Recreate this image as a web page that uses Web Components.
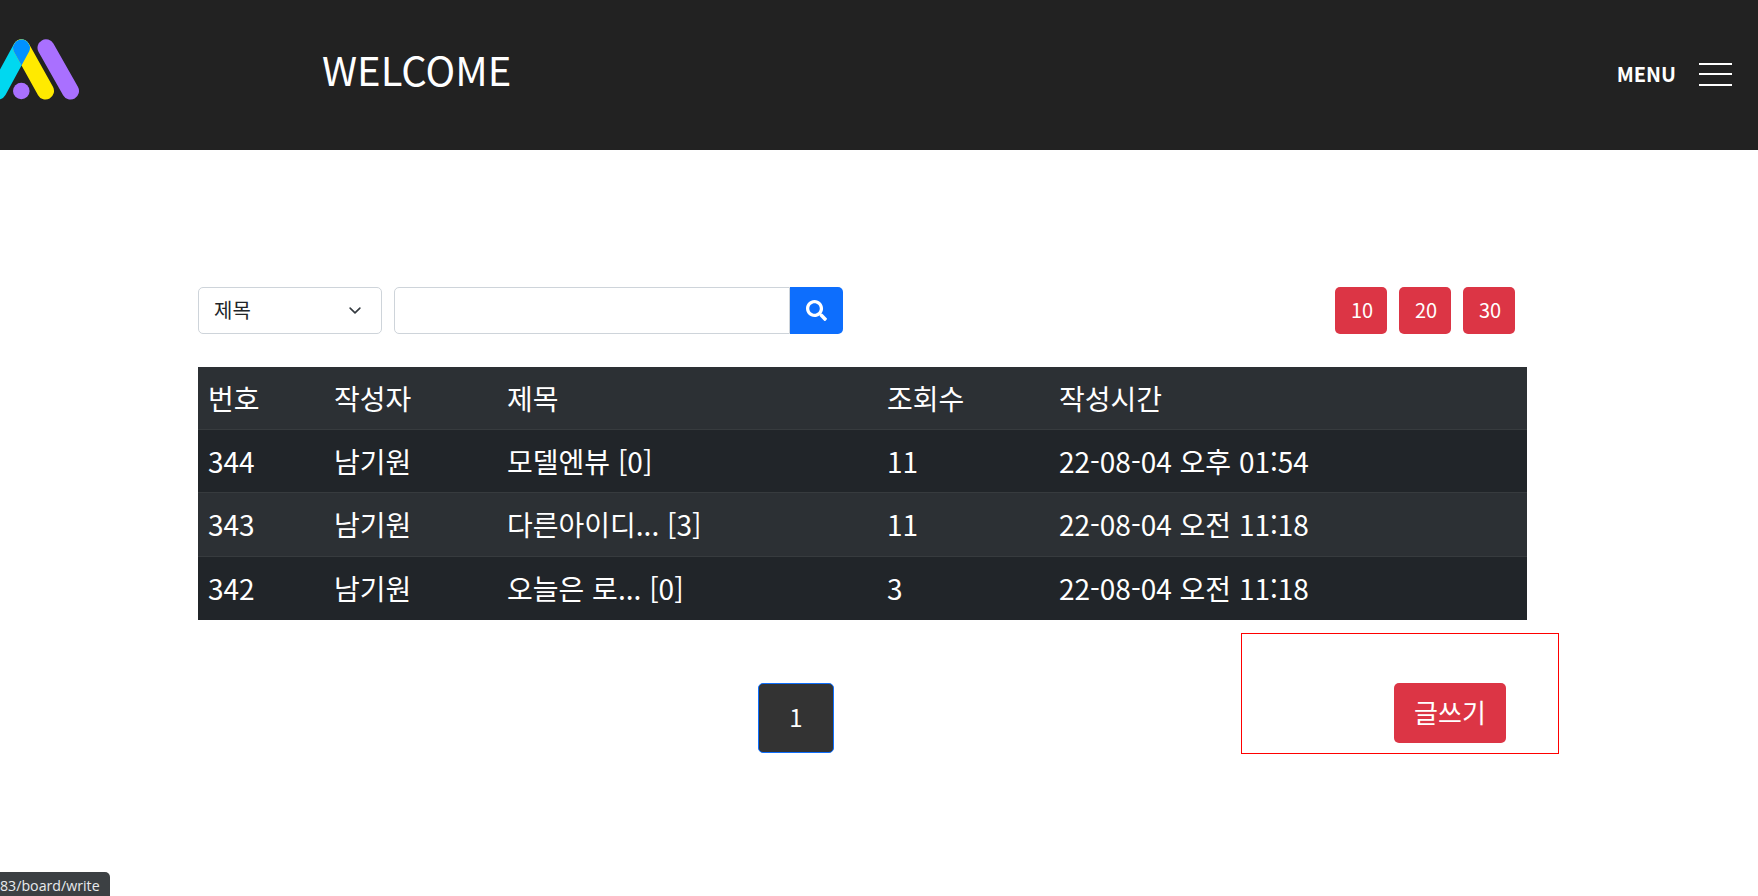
<!DOCTYPE html>
<html lang="ko">
<head>
<meta charset="utf-8">
<title>board</title>
<style>
    html, body { margin: 0; padding: 0; background: #fff; }
    body { font-family: "Noto Sans CJK KR", "Noto Sans", sans-serif; overflow: hidden; height: 896px; }
    main { display: block; padding: 137px 0 0 198px; }
</style>
</head>
<body>
<site-header title="WELCOME"></site-header>
<main>
    <board-toolbar></board-toolbar>
    <board-table></board-table>
    <board-footer></board-footer>
</main>
<status-bubble>83/board/write</status-bubble>

<script>
class SiteHeader extends HTMLElement {
    constructor() {
        super();
        this.attachShadow({mode: 'open'});
        this.shadowRoot.innerHTML = `
            <style>
                :host {
                    display: flex;
                    height: 150px;
                    background: #222;
                    color: #fff;
                    box-sizing: border-box;
                }
                svg { display: block; margin-top: 39px; width: 80px; height: 61px; flex: none; }
                h1 {
                    margin: 39px 0 0 242px;
                    font-size: 40px;
                    font-weight: 400;
                    line-height: 60px;
                }
                .menu {
                    margin-left: auto;
                    display: flex;
                    align-items: center;
                    gap: 23px;
                    padding: 0 26px 2px 0;
                    font-size: 20px;
                    font-weight: 700;
                }
                .menu span { position: relative; top: -1px; }
                .bars { display: flex; flex-direction: column; gap: 8.5px; width: 33px; }
                .bars i { display: block; height: 2px; background: #fff; }
            </style>
            <svg viewBox="0 39 80 61" aria-hidden="true">
                <defs>
                    <mask id="over" maskUnits="userSpaceOnUse" x="-20" y="30" width="110" height="80">
                        <path d="M21.5 47.8L45.5 91" stroke="#fff" stroke-width="17" stroke-linecap="round"/>
                    </mask>
                </defs>
                <path d="M21.5 47.8L-2 91" stroke="#00d8f0" stroke-width="17" stroke-linecap="round"/>
                <path d="M21.5 47.8L45.5 91" stroke="#ffea00" stroke-width="17" stroke-linecap="round"/>
                <path d="M21.5 47.8L-2 91" stroke="#0091ff" stroke-width="17" stroke-linecap="round" mask="url(#over)"/>
                <path d="M46 47.8L70.5 91" stroke="#a970ff" stroke-width="17" stroke-linecap="round"/>
                <circle cx="21.3" cy="91" r="8.3" fill="#a970ff"/>
            </svg>
            <h1></h1>
            <div class="menu"><span>MENU</span><div class="bars"><i></i><i></i><i></i></div></div>
        `;
    }

    connectedCallback() {
        this.shadowRoot.querySelector('h1').textContent = this.getAttribute('title');
    }
}

class RedButton extends HTMLElement {
    constructor() {
        super();
        this.attachShadow({mode: 'open'});
        this.shadowRoot.innerHTML = `
            <style>
                :host {
                    display: flex;
                    align-items: center;
                    justify-content: center;
                    box-sizing: border-box;
                    width: var(--w, 52px);
                    height: var(--h, 47px);
                    padding: 0 0 var(--pb, 2px) var(--pl, 2px);
                    background: #dc3545;
                    color: #fff;
                    border-radius: 5px;
                    font-size: var(--fs, 20px);
                    cursor: pointer;
                }
            </style>
            <slot></slot>
        `;
    }
}

class BoardToolbar extends HTMLElement {
    constructor() {
        super();
        this.attachShadow({mode: 'open'});
        this.shadowRoot.innerHTML = `
            <style>
                :host { display: flex; width: 1317px; height: 47px; font-family: inherit; }
                select, input { box-sizing: border-box; height: 47px; border: 1px solid #ced4da; background-color: #fff; font-family: inherit; margin: 0; }
                select {
                    width: 184px;
                    padding: 0 40px 3px 15px;
                    border-radius: 5px;
                    font-size: 20px;
                    color: #212529;
                    appearance: none;
                    background-image: url("data:image/svg+xml,%3csvg xmlns='http://www.w3.org/2000/svg' viewBox='0 0 16 16'%3e%3cpath fill='none' stroke='%23343a40' stroke-linecap='round' stroke-linejoin='round' stroke-width='2' d='M2 5l6 6 6-6'/%3e%3c/svg%3e");
                    background-repeat: no-repeat;
                    background-position: right 17px center;
                    background-size: 18px 13px;
                }
                input { width: 396px; margin-left: 12px; border-radius: 5px 0 0 5px; outline: none; }
                .go {
                    width: 53px;
                    height: 47px;
                    background: #0d6efd;
                    border-radius: 0 5px 5px 0;
                    display: flex;
                    align-items: center;
                    justify-content: center;
                }
                .go svg { width: 21px; height: 21px; fill: #fff; }
                .sizes { margin-left: auto; display: flex; gap: 12px; }
            </style>
            <select><option>제목</option></select>
            <input type="text">
            <div class="go">
                <svg viewBox="0 0 512 512"><path d="M505 442.700L405.300 343c-4.500-4.500-10.600-7-17-7H372c27.600-35.300 44-79.700 44-128C416 93.100 322.900 0 208 0S0 93.100 0 208s93.100 208 208 208c48.300 0 92.700-16.400 128-44v16.300c0 6.400 2.500 12.500 7 17l99.700 99.700c9.400 9.400 24.600 9.400 33.900 0l28.300-28.300c9.400-9.400 9.400-24.600.1-34zM208 336c-70.700 0-128-57.200-128-128 0-70.700 57.200-128 128-128 70.700 0 128 57.200 128 128 0 70.700-57.200 128-128 128z"/></svg>
            </div>
            <div class="sizes">
                <red-button>10</red-button>
                <red-button>20</red-button>
                <red-button>30</red-button>
            </div>
        `;
    }
}

class BoardTable extends HTMLElement {
    constructor() {
        super();
        this.attachShadow({mode: 'open'});
        const rows = [
            ['344', '남기원', '모델엔뷰 [0]', '11', '22-08-04 오후 01:54'],
            ['343', '남기원', '다른아이디... [3]', '11', '22-08-04 오전 11:18'],
            ['342', '남기원', '오늘은 로... [0]', '3', '22-08-04 오전 11:18']
        ];
        const tds = row => row.map(c => `<td>${c}</td>`).join('');
        this.shadowRoot.innerHTML = `
            <style>
                :host { display: block; width: 1329px; margin-top: 33px; }
                table {
                    width: 100%;
                    table-layout: fixed;
                    border-collapse: collapse;
                    color: #fff;
                    font-size: 28px;
                }
                td, th {
                    padding: 8px;
                    height: 46px;
                    line-height: 46px;
                    font-weight: 400;
                    text-align: left;
                    white-space: nowrap;
                    box-sizing: content-box;
                    border-bottom: 1px solid #373b3e;
                }
                td:first-child, th:first-child { padding-left: 10px; }
                tr { background: #212529; }
                tr.odd { background: #2c3034; }
                tr.odd td { padding-bottom: 9px; }
                tr:last-child td { border-bottom-color: #212529; }
            </style>
            <table>
                <colgroup>
                    <col style="width:128px"><col style="width:173px"><col style="width:380px"><col style="width:172px"><col>
                </colgroup>
                <thead>
                    <tr class="odd"><th>번호</th><th>작성자</th><th>제목</th><th>조회수</th><th>작성시간</th></tr>
                </thead>
                <tbody>
                    ${rows.map((r, i) => `<tr class="${i % 2 ? 'odd' : ''}">${tds(r)}</tr>`).join('')}
                </tbody>
            </table>
        `;
    }
}

class BoardFooter extends HTMLElement {
    constructor() {
        super();
        this.attachShadow({mode: 'open'});
        this.shadowRoot.innerHTML = `
            <style>
                :host { display: flex; align-items: flex-start; margin-top: 13px; }
                .page {
                    box-sizing: border-box;
                    width: 76px;
                    height: 70px;
                    margin: 50px 0 0 560px;
                    padding-bottom: 3px;
                    display: flex;
                    align-items: center;
                    justify-content: center;
                    background: #333;
                    color: #fff;
                    border: 1px solid #0d6efd;
                    border-radius: 5px;
                    font-size: 24px;
                }
                .box {
                    box-sizing: border-box;
                    width: 318px;
                    height: 121px;
                    margin-left: 407px;
                    padding: 49px 0 0 152px;
                    border: 1px solid #f00;
                }
                red-button { --w: 112px; --h: 60px; --fs: 26px; --pb: 3px; --pl: 0px; }
            </style>
            <div class="page">1</div>
            <div class="box"><red-button>글쓰기</red-button></div>
        `;
    }
}

class StatusBubble extends HTMLElement {
    constructor() {
        super();
        this.attachShadow({mode: 'open'});
        this.shadowRoot.innerHTML = `
            <style>
                :host {
                    position: fixed;
                    left: 0;
                    bottom: 0;
                    height: 24px;
                    width: 110px;
                    box-sizing: border-box;
                    padding: 3px 0 0 0;
                    background: #3c4043;
                    color: #e8eaed;
                    border-radius: 0 5px 0 0;
                    font-family: "Open Sans", sans-serif;
                    font-size: 14.2px;
                    line-height: 22px;
                    white-space: nowrap;
                    overflow: hidden;
                }
            </style>
            <slot></slot>
        `;
    }
}

customElements.define('site-header', SiteHeader);
customElements.define('red-button', RedButton);
customElements.define('board-toolbar', BoardToolbar);
customElements.define('board-table', BoardTable);
customElements.define('board-footer', BoardFooter);
customElements.define('status-bubble', StatusBubble);
</script>
</body>
</html>
